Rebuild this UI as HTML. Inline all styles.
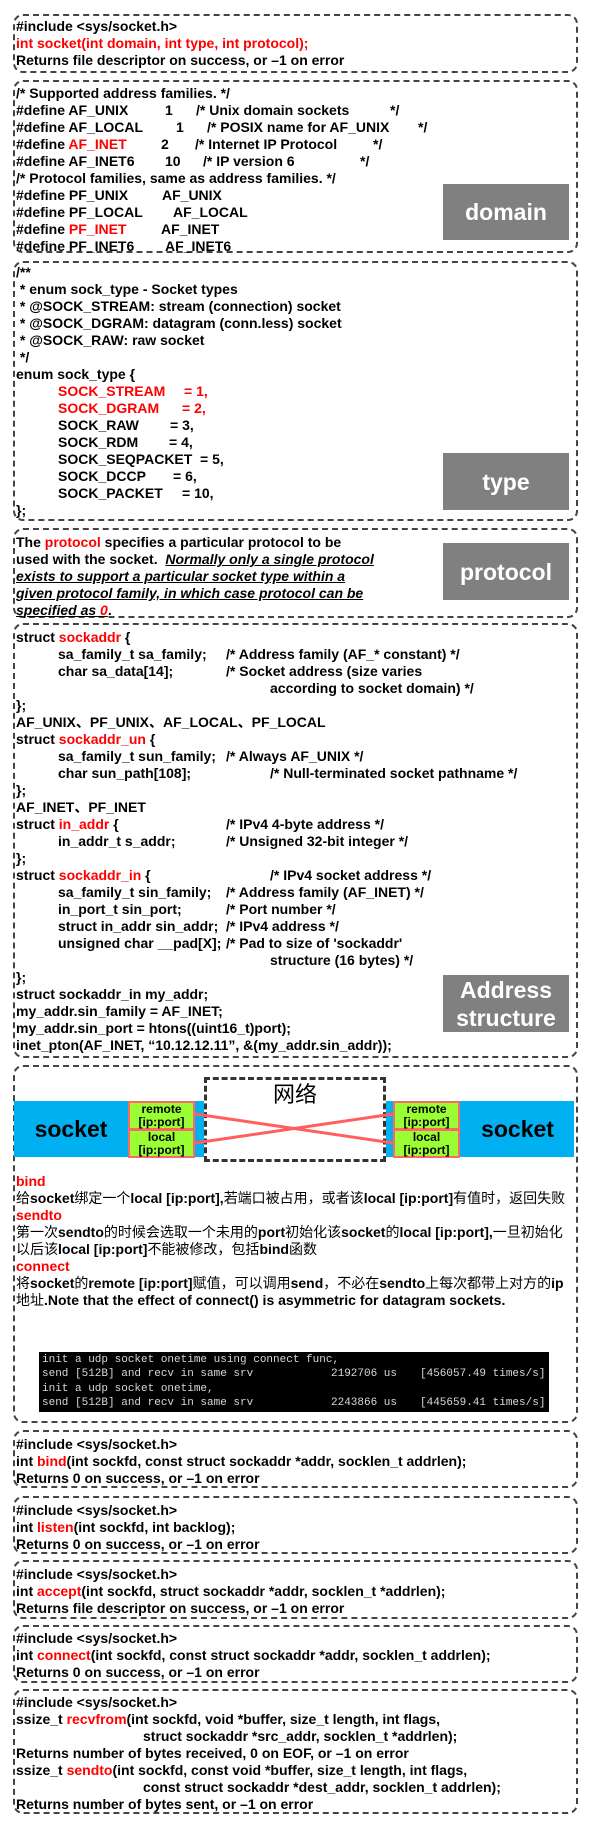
<!DOCTYPE html>
<html><head><meta charset="utf-8">
<style>
body{margin:0;background:#fff;width:591px;height:1826px;position:relative;overflow:hidden}
.b{position:absolute;left:13px;width:561px;border:2px dashed #444;border-radius:10px}
.t{position:absolute;white-space:pre;font:bold 14px/17px "Liberation Sans","Noto Sans CJK SC",sans-serif;color:#000}
.r{color:#f00}
.n{font-weight:normal}
.iu{font-style:italic;text-decoration:underline}
.lab{position:absolute;left:443px;width:126px;background:#808080;color:#fff;font:bold 23px/28px "Liberation Sans",sans-serif;text-align:center;display:flex;align-items:center;justify-content:center;flex-direction:column}
.cj{transform-origin:0 50%}
.g{position:absolute;left:0;width:63px;height:25px;background:#99ff33;border:2px solid #ff6666;font:bold 12px/12.5px "Liberation Sans",sans-serif;text-align:center}
.m{position:absolute;white-space:pre;font:11px/14px "Liberation Mono",monospace;color:#d8d8d8}
</style></head><body>

<div class="b" style="top:14px;height:55px"></div>
<div class="t" style="left:16px;top:18px">#include &lt;sys/socket.h&gt;</div>
<div class="t r" style="left:16px;top:35px">int socket(int domain, int type, int protocol);</div>
<div class="t" style="left:16px;top:52px">Returns file descriptor on success, or –1 on error</div>

<div class="b" style="top:80px;height:169px"></div>
<div class="t" style="left:16px;top:85px">/* Supported address families. */</div>
<div class="t" style="left:16px;top:102px">#define AF_UNIX</div><div class="t" style="left:165px;top:102px">1</div><div class="t" style="left:196px;top:102px">/* Unix domain sockets</div><div class="t" style="left:390px;top:102px">*/</div>
<div class="t" style="left:16px;top:119px">#define AF_LOCAL</div><div class="t" style="left:176px;top:119px">1</div><div class="t" style="left:207px;top:119px">/* POSIX name for AF_UNIX</div><div class="t" style="left:418px;top:119px">*/</div>
<div class="t" style="left:16px;top:136px">#define <span class="r">AF_INET</span></div><div class="t" style="left:161px;top:136px">2</div><div class="t" style="left:195px;top:136px">/* Internet IP Protocol</div><div class="t" style="left:373px;top:136px">*/</div>
<div class="t" style="left:16px;top:153px">#define AF_INET6</div><div class="t" style="left:165px;top:153px">10</div><div class="t" style="left:203px;top:153px">/* IP version 6</div><div class="t" style="left:360px;top:153px">*/</div>
<div class="t" style="left:16px;top:170px">/* Protocol families, same as address families. */</div>
<div class="t" style="left:16px;top:187px">#define PF_UNIX</div><div class="t" style="left:162px;top:187px">AF_UNIX</div>
<div class="t" style="left:16px;top:204px">#define PF_LOCAL</div><div class="t" style="left:173px;top:204px">AF_LOCAL</div>
<div class="t" style="left:16px;top:221px">#define <span class="r">PF_INET</span></div><div class="t" style="left:161px;top:221px">AF_INET</div>
<div class="t" style="left:16px;top:238px">#define PF_INET6</div><div class="t" style="left:165px;top:238px">AF_INET6</div>
<div class="lab" style="top:184px;height:56px">domain</div>

<div class="b" style="top:261px;height:256px"></div>
<div class="t" style="left:16px;top:264px">/**</div>
<div class="t" style="left:16px;top:281px"> * enum sock_type - Socket types</div>
<div class="t" style="left:16px;top:298px"> * @SOCK_STREAM: stream (connection) socket</div>
<div class="t" style="left:16px;top:315px"> * @SOCK_DGRAM: datagram (conn.less) socket</div>
<div class="t" style="left:16px;top:332px"> * @SOCK_RAW: raw socket</div>
<div class="t" style="left:16px;top:349px"> */</div>
<div class="t" style="left:16px;top:366px">enum sock_type {</div>
<div class="t r" style="left:58px;top:383px">SOCK_STREAM</div><div class="t r" style="left:184px;top:383px">= 1,</div>
<div class="t r" style="left:58px;top:400px">SOCK_DGRAM</div><div class="t r" style="left:182px;top:400px">= 2,</div>
<div class="t" style="left:58px;top:417px">SOCK_RAW</div><div class="t" style="left:170px;top:417px">= 3,</div>
<div class="t" style="left:58px;top:434px">SOCK_RDM</div><div class="t" style="left:169px;top:434px">= 4,</div>
<div class="t" style="left:58px;top:451px">SOCK_SEQPACKET</div><div class="t" style="left:200px;top:451px">= 5,</div>
<div class="t" style="left:58px;top:468px">SOCK_DCCP</div><div class="t" style="left:173px;top:468px">= 6,</div>
<div class="t" style="left:58px;top:485px">SOCK_PACKET</div><div class="t" style="left:182px;top:485px">= 10,</div>
<div class="t" style="left:16px;top:502px">};</div>
<div class="lab" style="top:453px;height:57px">type</div>

<div class="b" style="top:528px;height:86px"></div>
<div class="t" style="left:16px;top:534px">The <span class="r">protocol</span> specifies a particular protocol to be</div>
<div class="t" style="left:16px;top:551px">used with the socket.  <span class="iu">Normally only a single protocol</span></div>
<div class="t" style="left:16px;top:568px"><span class="iu">exists to support a particular socket type within a</span></div>
<div class="t" style="left:16px;top:585px"><span class="iu">given protocol family, in which case protocol can be</span></div>
<div class="t" style="left:16px;top:602px"><span class="iu">specified as <span class="r">0</span></span>.</div>
<div class="lab" style="top:543px;height:57px">protocol</div>

<div class="b" style="top:623px;height:431px"></div>
<div class="t" style="left:16px;top:629px">struct <span class="r">sockaddr</span> {</div>
<div class="t" style="left:58px;top:646px">sa_family_t sa_family;</div><div class="t" style="left:226px;top:646px">/* Address family (AF_* constant) */</div>
<div class="t" style="left:58px;top:663px">char sa_data[14];</div><div class="t" style="left:226px;top:663px">/* Socket address (size varies</div>
<div class="t" style="left:270px;top:680px">according to socket domain) */</div>
<div class="t" style="left:16px;top:697px">};</div>
<div class="t" style="left:16px;top:714px">AF_UNIX、PF_UNIX、AF_LOCAL、PF_LOCAL</div>
<div class="t" style="left:16px;top:731px">struct <span class="r">sockaddr_un</span> {</div>
<div class="t" style="left:58px;top:748px">sa_family_t sun_family;</div><div class="t" style="left:226px;top:748px">/* Always AF_UNIX */</div>
<div class="t" style="left:58px;top:765px">char sun_path[108];</div><div class="t" style="left:270px;top:765px">/* Null-terminated socket pathname */</div>
<div class="t" style="left:16px;top:782px">};</div>
<div class="t" style="left:16px;top:799px">AF_INET、PF_INET</div>
<div class="t" style="left:16px;top:816px">struct <span class="r">in_addr</span> {</div><div class="t" style="left:226px;top:816px">/* IPv4 4-byte address */</div>
<div class="t" style="left:58px;top:833px">in_addr_t s_addr;</div><div class="t" style="left:226px;top:833px">/* Unsigned 32-bit integer */</div>
<div class="t" style="left:16px;top:850px">};</div>
<div class="t" style="left:16px;top:867px">struct <span class="r">sockaddr_in</span> {</div><div class="t" style="left:270px;top:867px">/* IPv4 socket address */</div>
<div class="t" style="left:58px;top:884px">sa_family_t sin_family;</div><div class="t" style="left:226px;top:884px">/* Address family (AF_INET) */</div>
<div class="t" style="left:58px;top:901px">in_port_t sin_port;</div><div class="t" style="left:226px;top:901px">/* Port number */</div>
<div class="t" style="left:58px;top:918px">struct in_addr sin_addr;</div><div class="t" style="left:226px;top:918px">/* IPv4 address */</div>
<div class="t" style="left:58px;top:935px">unsigned char __pad[X];</div><div class="t" style="left:226px;top:935px">/* Pad to size of 'sockaddr'</div>
<div class="t" style="left:270px;top:952px">structure (16 bytes) */</div>
<div class="t" style="left:16px;top:969px">};</div>
<div class="t" style="left:16px;top:986px">struct sockaddr_in my_addr;</div>
<div class="t" style="left:16px;top:1003px">my_addr.sin_family = AF_INET;</div>
<div class="t" style="left:16px;top:1020px">my_addr.sin_port = htons((uint16_t)port);</div>
<div class="t" style="left:16px;top:1037px">inet_pton(AF_INET, “10.12.12.11”, &amp;(my_addr.sin_addr));</div>
<div class="lab" style="top:975px;height:57px;line-height:28px">Address<br>structure</div>

<div class="b" style="top:1065px;height:354px"></div>
<div style="position:absolute;left:14px;top:1101px;width:560px;height:56px;background:#00b0f0"></div>
<div style="position:absolute;left:14px;top:1101px;width:114px;height:56px;font:bold 23px/56px 'Liberation Sans',sans-serif;text-align:center">socket</div>
<div style="position:absolute;left:461px;top:1101px;width:113px;height:56px;font:bold 23px/56px 'Liberation Sans',sans-serif;text-align:center">socket</div>
<div style="position:absolute;left:204px;top:1077px;width:176px;height:79px;border:3px dashed #333;background:#fff"></div>
<div style="position:absolute;left:204px;top:1079px;width:182px;text-align:center;font:22px/28px 'Noto Sans CJK SC',sans-serif">网络</div>
<svg style="position:absolute;left:0;top:0" width="591" height="1826"><line x1="195" y1="1114" x2="393" y2="1143" stroke="#ff5f5f" stroke-width="3"/><line x1="195" y1="1143" x2="393" y2="1114" stroke="#ff5f5f" stroke-width="3"/></svg>
<div class="g" style="left:128px;top:1101px">remote<br>[ip:port]</div>
<div class="g" style="left:128px;top:1129px">local<br>[ip:port]</div>
<div class="g" style="left:393px;top:1101px">remote<br>[ip:port]</div>
<div class="g" style="left:393px;top:1129px">local<br>[ip:port]</div>
<div class="t r" style="left:16px;top:1173px">bind</div>
<div class="t cj" style="left:16px;top:1190px"><span class="n">给</span>socket<span class="n">绑定一个</span>local [ip:port],<span class="n">若端口被占用，或者该</span>local [ip:port]<span class="n">有值时，返回失败</span></div>
<div class="t r" style="left:16px;top:1207px">sendto</div>
<div class="t cj" style="left:16px;top:1224px"><span class="n">第一次</span>sendto<span class="n">的时候会选取一个未用的</span>port<span class="n">初始化该</span>socket<span class="n">的</span>local [ip:port],<span class="n">一旦初始化</span></div>
<div class="t cj" style="left:16px;top:1241px"><span class="n">以后该</span>local [ip:port]<span class="n">不能被修改，包括</span>bind<span class="n">函数</span></div>
<div class="t r" style="left:16px;top:1258px">connect</div>
<div class="t cj" style="left:16px;top:1275px"><span class="n">将</span>socket<span class="n">的</span>remote [ip:port]<span class="n">赋值，可以调用</span>send<span class="n">，不必在</span>sendto<span class="n">上每次都带上对方的</span>ip</div>
<div class="t cj" style="left:16px;top:1292px"><span class="n">地址</span>.Note that the effect of connect() is asymmetric for datagram sockets.</div>
<div style="position:absolute;left:39px;top:1352px;width:510px;height:60px;background:#000"></div>
<div class="m" style="left:42px;top:1353px">init a udp socket onetime using connect func,</div>
<div class="m" style="left:42px;top:1367px">send [512B] and recv in same srv</div><div class="m" style="left:331px;top:1367px">2192706 us</div><div class="m" style="left:420px;top:1367px">[456057.49 times/s]</div>
<div class="m" style="left:42px;top:1382px">init a udp socket onetime,</div>
<div class="m" style="left:42px;top:1396px">send [512B] and recv in same srv</div><div class="m" style="left:331px;top:1396px">2243866 us</div><div class="m" style="left:420px;top:1396px">[445659.41 times/s]</div>

<div class="b" style="top:1430px;height:54px"></div>
<div class="t" style="left:16px;top:1436px">#include &lt;sys/socket.h&gt;</div>
<div class="t" style="left:16px;top:1453px">int <span class="r">bind</span>(int sockfd, const struct sockaddr *addr, socklen_t addrlen);</div>
<div class="t" style="left:16px;top:1470px">Returns 0 on success, or –1 on error</div>

<div class="b" style="top:1496px;height:54px"></div>
<div class="t" style="left:16px;top:1502px">#include &lt;sys/socket.h&gt;</div>
<div class="t" style="left:16px;top:1519px">int <span class="r">listen</span>(int sockfd, int backlog);</div>
<div class="t" style="left:16px;top:1536px">Returns 0 on success, or –1 on error</div>

<div class="b" style="top:1560px;height:55px"></div>
<div class="t" style="left:16px;top:1566px">#include &lt;sys/socket.h&gt;</div>
<div class="t" style="left:16px;top:1583px">int <span class="r">accept</span>(int sockfd, struct sockaddr *addr, socklen_t *addrlen);</div>
<div class="t" style="left:16px;top:1600px">Returns file descriptor on success, or –1 on error</div>

<div class="b" style="top:1625px;height:54px"></div>
<div class="t" style="left:16px;top:1630px">#include &lt;sys/socket.h&gt;</div>
<div class="t" style="left:16px;top:1647px">int <span class="r">connect</span>(int sockfd, const struct sockaddr *addr, socklen_t addrlen);</div>
<div class="t" style="left:16px;top:1664px">Returns 0 on success, or –1 on error</div>

<div class="b" style="top:1689px;height:121px"></div>
<div class="t" style="left:16px;top:1694px">#include &lt;sys/socket.h&gt;</div>
<div class="t" style="left:16px;top:1711px">ssize_t <span class="r">recvfrom</span>(int sockfd, void *buffer, size_t length, int flags,</div>
<div class="t" style="left:143px;top:1728px">struct sockaddr *src_addr, socklen_t *addrlen);</div>
<div class="t" style="left:16px;top:1745px">Returns number of bytes received, 0 on EOF, or –1 on error</div>
<div class="t" style="left:16px;top:1762px">ssize_t <span class="r">sendto</span>(int sockfd, const void *buffer, size_t length, int flags,</div>
<div class="t" style="left:143px;top:1779px">const struct sockaddr *dest_addr, socklen_t addrlen);</div>
<div class="t" style="left:16px;top:1796px">Returns number of bytes sent, or –1 on error</div>
</body></html>
